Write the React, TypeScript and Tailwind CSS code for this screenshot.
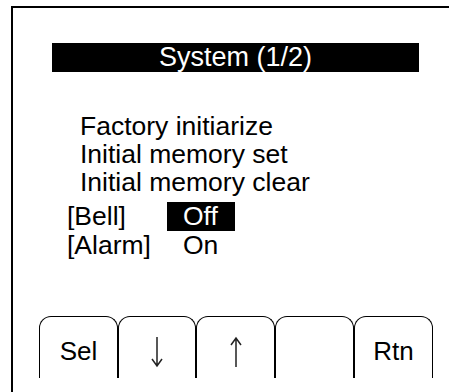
function Arrow({ up }: { up?: boolean }) {
  return (
    <svg width="14" height="32" viewBox="0 0 14 32" className="text-[#222]">
      {up ? (
        <path d="M7 31V2M2 9l5-7 5 7" fill="none" stroke="currentColor" strokeWidth="1.5" />
      ) : (
        <path d="M7 1v29M2 23l5 7 5-7" fill="none" stroke="currentColor" strokeWidth="1.5" />
      )}
    </svg>
  );
}

const keys = ['Sel', 'down', 'up', '', 'Rtn'];

export default function App() {
  return (
    <div
      className="w-[449px] h-[392px] overflow-hidden bg-white text-black"
      style={{ fontFamily: '"Liberation Sans", Arial, sans-serif' }}
    >
      <div className="ml-[11px] mt-[6px] h-[400px] border-l-2 border-t-2 border-black">
        <div className="ml-[39px] mt-[35px] w-[367px] h-[29px] bg-black text-white text-[27px] leading-[29px] text-center">
          System (1/2)
        </div>

        <div className="mt-[40px] text-[26.5px] leading-[28px]">
          <div className="pl-[67px]">Factory initiarize</div>
          <div className="pl-[67px]">Initial memory set</div>
          <div className="pl-[67px]">Initial memory clear</div>
          <div className="flex items-center h-[30px] pl-[54px] mt-[5px]">
            <span className="w-[100px]">[Bell]</span>
            <span className="bg-black text-white h-[29px] leading-[29px] w-[68px] pl-[16px]">Off</span>
          </div>
          <div className="flex pl-[54px]">
            <span className="w-[116px]">[Alarm]</span>
            <span>On</span>
          </div>
        </div>

        <div className="flex ml-[26px] mt-[57px]">
          {keys.map((k, i) => (
            <div
              key={i}
              className={`${i === 1 ? 'w-[78px]' : 'w-[79px]'} h-[62px] border-l border-t border-r border-black rounded-t-[12px] flex items-center justify-center pt-[8px] text-[26px]`}
            >
              {k === 'down' ? <Arrow /> : k === 'up' ? <Arrow up /> : k}
            </div>
          ))}
        </div>
      </div>
    </div>
  );
}
